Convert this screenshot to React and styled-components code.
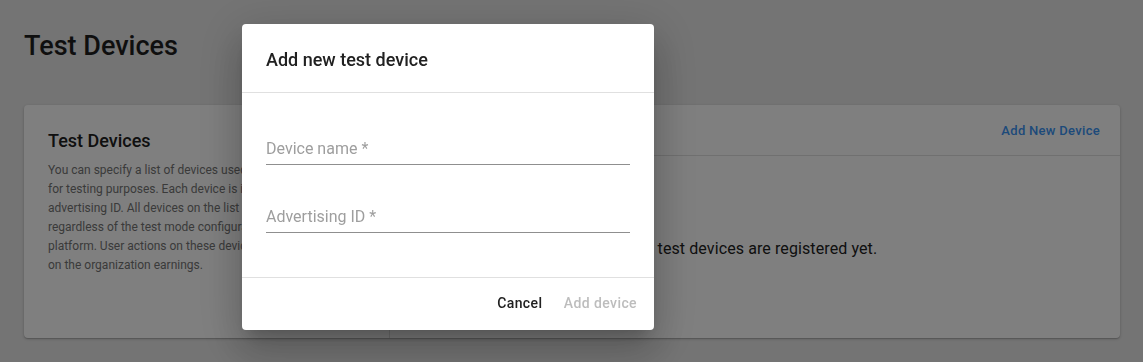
import React from "react";
import styled, { createGlobalStyle } from "styled-components";

const Global = createGlobalStyle`
  html, body { margin: 0; padding: 0; background: #e8e8e8; }
  body { font-family: Roboto, "Noto Sans", Arial, sans-serif; color: #212121; }
  * { box-sizing: border-box; }
`;

const Page = styled.div`
  padding: 0 23px 24px 24px;
  min-height: 362px;
`;

const PageTitle = styled.h1`
  margin: 0;
  padding-top: 28px;
  height: 105px;
  font-size: 27px;
  line-height: 36px;
  font-weight: 500;
  color: #1f1f1f;
`;

const Card = styled.section`
  display: grid;
  grid-template-columns: 366px 1fr;
  height: 233px;
  background: #fff;
  border-radius: 4px;
  box-shadow: 0 1px 3px rgba(0,0,0,0.2), 0 1px 1px rgba(0,0,0,0.14);
  overflow: hidden;
`;

const Side = styled.div`
  padding: 24px 24px;
  border-right: 1px solid #e0e0e0;
`;

const SideTitle = styled.h2`
  margin: 0 0 8px;
  font-size: 18px;
  line-height: 24px;
  font-weight: 500;
  color: #212121;
`;

const SideText = styled.p`
  margin: 0;
  font-size: 12px;
  line-height: 19px;
  color: #757575;
`;

const Main = styled.div`
  display: flex;
  flex-direction: column;
`;

const MainHeader = styled.div`
  height: 51px;
  display: flex;
  align-items: center;
  justify-content: flex-end;
  padding-right: 20px;
  border-bottom: 1px solid #e0e0e0;
`;

const LinkButton = styled.button`
  border: 0;
  background: none;
  padding: 0;
  font-family: inherit;
  font-size: 13px;
  font-weight: 500;
  letter-spacing: 0.3px;
  color: #3a94f5;
  cursor: pointer;
`;

const Empty = styled.div`
  flex: 1;
  display: flex;
  align-items: center;
  justify-content: center;
  padding-top: 2px;
  font-size: 16px;
  letter-spacing: 0.1px;
  color: #212121;
`;

const Backdrop = styled.div`
  position: fixed;
  inset: 0;
  background: rgba(0, 0, 0, 0.5);
`;

const Dialog = styled.div`
  position: fixed;
  left: 242px;
  top: 24px;
  width: 412px;
  background: #fff;
  border-radius: 4px;
  box-shadow: 0 11px 15px -7px rgba(0,0,0,0.2), 0 24px 38px 3px rgba(0,0,0,0.14), 0 9px 46px 8px rgba(0,0,0,0.12);
  display: flex;
  flex-direction: column;
`;

const DialogHeader = styled.div`
  height: 69px;
  padding: 24px 24px 0;
  border-bottom: 1px solid #e0e0e0;
`;

const DialogTitle = styled.h3`
  margin: 0;
  font-size: 18px;
  line-height: 24px;
  font-weight: 500;
  color: #212121;
`;

const DialogBody = styled.div`
  display: flex;
  flex-direction: column;
  gap: 20px;
  padding: 24px 24px 44px;
  border-bottom: 1px solid #e0e0e0;
`;

const Field = styled.label`
  height: 48px;
  display: flex;
  align-items: flex-end;
  padding-bottom: 6px;
  border-bottom: 1px solid #8f8f8f;
  font-size: 16px;
  line-height: 19px;
  color: #9e9e9e;
`;

const DialogFooter = styled.div`
  height: 52px;
  display: flex;
  align-items: center;
  justify-content: flex-end;
  gap: 4px;
  padding: 0 9px 2px 8px;
`;

const ActionButton = styled.button`
  min-width: 64px;
  height: 36px;
  padding: 0 8px;
  border: 0;
  background: none;
  font-family: inherit;
  font-size: 14px;
  font-weight: 500;
  letter-spacing: 0.4px;
  color: ${(p) => (p.disabled ? "#bdbdbd" : "#212121")};
`;

export default function App() {
  return (
    <>
      <Global />
      <Page>
        <PageTitle>Test Devices</PageTitle>
        <Card>
          <Side>
            <SideTitle>Test Devices</SideTitle>
            <SideText>
              You can specify a list of devices used by your organization
              for testing purposes. Each device is identified by its
              advertising ID. All devices on the list receive test ads
              regardless of the test mode configuration in the ads
              platform. User actions on these devices don't have impact
              on the organization earnings.
            </SideText>
          </Side>
          <Main>
            <MainHeader>
              <LinkButton>Add New Device</LinkButton>
            </MainHeader>
            <Empty>No test devices are registered yet.</Empty>
          </Main>
        </Card>
      </Page>
      <Backdrop />
      <Dialog role="dialog">
        <DialogHeader>
          <DialogTitle>Add new test device</DialogTitle>
        </DialogHeader>
        <DialogBody>
          <Field>Device name *</Field>
          <Field>Advertising ID *</Field>
        </DialogBody>
        <DialogFooter>
          <ActionButton>Cancel</ActionButton>
          <ActionButton disabled>Add device</ActionButton>
        </DialogFooter>
      </Dialog>
    </>
  );
}
